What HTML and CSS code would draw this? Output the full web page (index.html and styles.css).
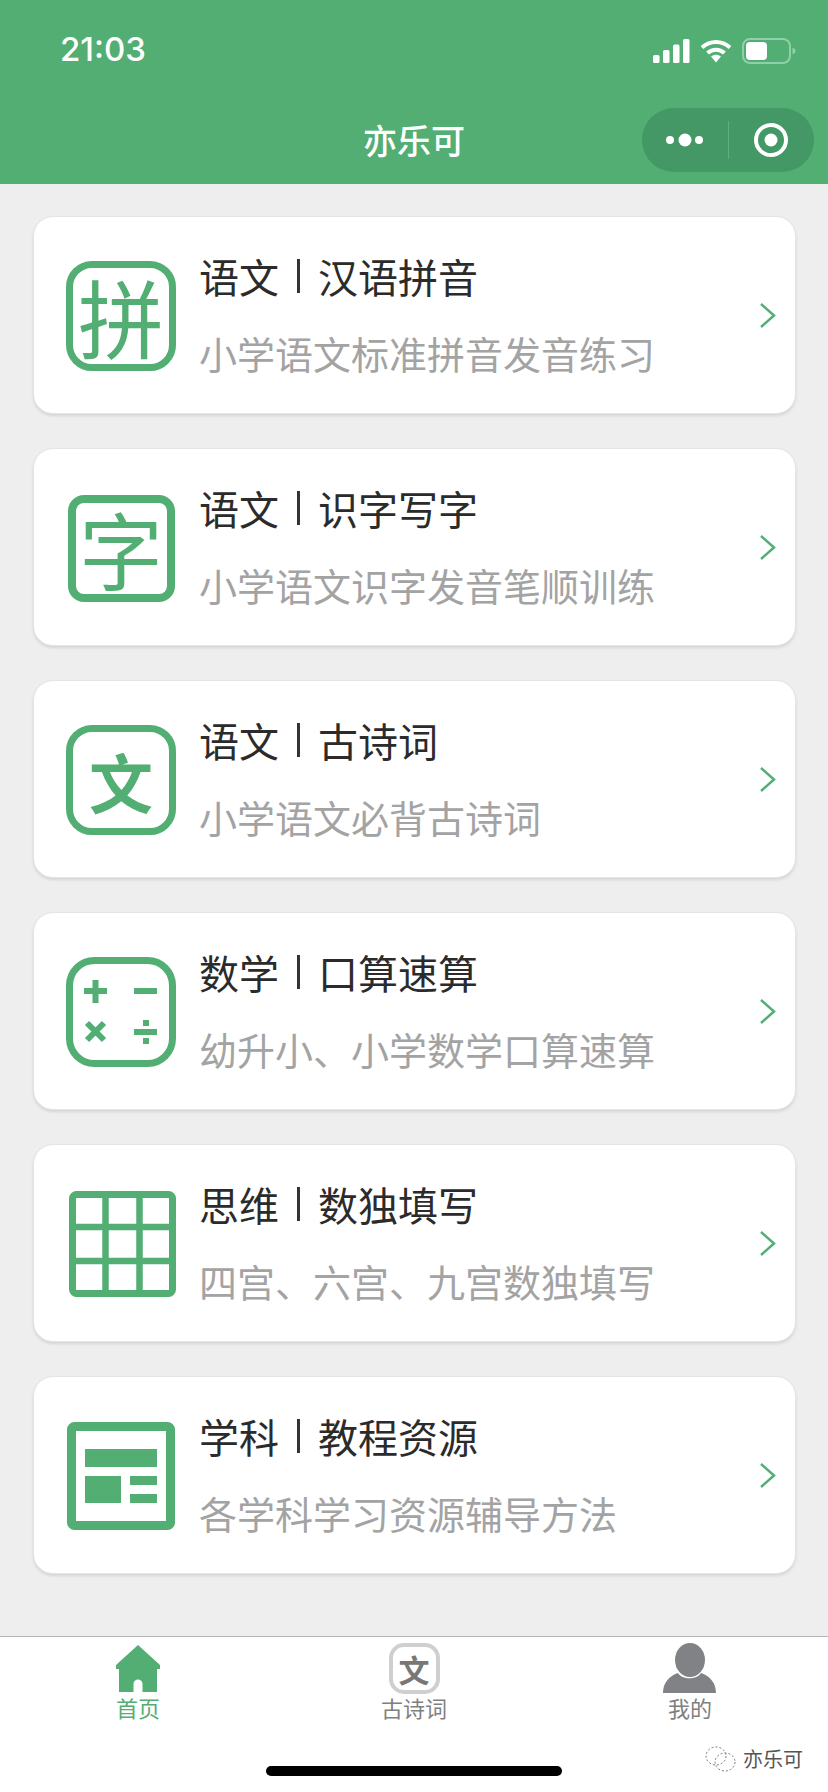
FILE: index.html
```html
<!DOCTYPE html>
<html lang="zh-CN">
<head>
    <meta charset="UTF-8">
    <title>亦乐可</title>
    <link rel="stylesheet" href="styles.css">
</head>
<body>
    <header class="top">
        <div class="status">
            <span class="time">21:03</span>
            <div class="status-icons">
                <svg class="signal" width="37" height="24" viewBox="0 0 37 24"><rect x="0" y="16" width="6.5" height="8" rx="1.5"/><rect x="10" y="11" width="6.5" height="13" rx="1.5"/><rect x="20" y="5.5" width="6.5" height="18.5" rx="1.5"/><rect x="30" y="0" width="6.5" height="24" rx="1.5"/></svg>
                <svg class="wifi" width="32" height="24" viewBox="0 0 32 24"><path d="M2 8.5C10 1 22 1 30 8.5M7.5 14C12.5 9.5 19.5 9.5 24.5 14" fill="none" stroke="#fff" stroke-width="4"/><path d="M11 17.5C14 15 18 15 21 17.5L16 23.5Z" fill="#fff"/></svg>
                <svg class="battery" width="54" height="26" viewBox="0 0 54 26"><rect x="1" y="1" width="47" height="24" rx="7" fill="none" stroke="#8fd0a8" stroke-width="2"/><rect x="4" y="4" width="21" height="18" rx="4" fill="#fff"/><path d="M50.5 9.5C52.5 10.5 53.5 11.5 53.5 13C53.5 14.5 52.5 15.5 50.5 16.5Z" fill="#8fd0a8"/></svg>
            </div>
        </div>
        <div class="nav">
            <h1 class="nav-title">亦乐可</h1>
            <div class="capsule">
                <div class="capsule-part">
                    <svg width="40" height="14" viewBox="0 0 40 14" fill="#fff"><circle cx="5" cy="7" r="4"/><circle cx="20" cy="7" r="6.5"/><circle cx="34" cy="7" r="4"/></svg>
                </div>
                <div class="capsule-line"></div>
                <div class="capsule-part">
                    <svg width="36" height="36" viewBox="0 0 36 36"><circle cx="18" cy="18" r="15" fill="none" stroke="#fff" stroke-width="4"/><circle cx="18" cy="18" r="6.5" fill="#fff"/></svg>
                </div>
            </div>
        </div>
    </header>

    <main class="list">
        <a class="card">
            <div class="slot"><div class="char-icon char-pin">拼</div></div>
            <div class="card-text">
                <div class="card-title">语文 <i class="bar"></i> 汉语拼音</div>
                <div class="card-sub">小学语文标准拼音发音练习</div>
            </div>
            <svg class="arrow" width="18" height="27" viewBox="0 0 18 27"><path d="M2 2L15 13.5L2 25" fill="none" stroke="#52ae73" stroke-width="2.5"/></svg>
        </a>
        <a class="card">
            <div class="slot"><div class="char-icon char-zi">字</div></div>
            <div class="card-text">
                <div class="card-title">语文 <i class="bar"></i> 识字写字</div>
                <div class="card-sub">小学语文识字发音笔顺训练</div>
            </div>
            <svg class="arrow" width="18" height="27" viewBox="0 0 18 27"><path d="M2 2L15 13.5L2 25" fill="none" stroke="#52ae73" stroke-width="2.5"/></svg>
        </a>
        <a class="card">
            <div class="slot"><div class="char-icon char-wen">文</div></div>
            <div class="card-text">
                <div class="card-title">语文 <i class="bar"></i> 古诗词</div>
                <div class="card-sub">小学语文必背古诗词</div>
            </div>
            <svg class="arrow" width="18" height="27" viewBox="0 0 18 27"><path d="M2 2L15 13.5L2 25" fill="none" stroke="#52ae73" stroke-width="2.5"/></svg>
        </a>
        <a class="card">
            <div class="slot">
                <svg width="110" height="110" viewBox="0 0 110 110">
                    <rect x="3.5" y="3.5" width="103" height="103" rx="25" fill="none" stroke="#52ae73" stroke-width="7"/>
                    <path d="M18 34H41M29.5 23V46M68 34H91M68 75H91M21 66L38 83M38 66L21 83" fill="none" stroke="#52ae73" stroke-width="6"/>
                    <rect x="77" y="63" width="6" height="6" fill="#52ae73"/>
                    <rect x="77" y="81" width="6" height="6" fill="#52ae73"/>
                </svg>
            </div>
            <div class="card-text">
                <div class="card-title">数学 <i class="bar"></i> 口算速算</div>
                <div class="card-sub">幼升小、小学数学口算速算</div>
            </div>
            <svg class="arrow" width="18" height="27" viewBox="0 0 18 27"><path d="M2 2L15 13.5L2 25" fill="none" stroke="#52ae73" stroke-width="2.5"/></svg>
        </a>
        <a class="card">
            <div class="slot">
                <svg width="110" height="110" viewBox="0 0 110 110">
                    <rect x="6.5" y="5.5" width="100" height="99" rx="4" fill="none" stroke="#52ae73" stroke-width="7"/>
                    <path d="M39.5 5V105M73.5 5V105M6 38H107M6 72H107" fill="none" stroke="#52ae73" stroke-width="6.5"/>
                </svg>
            </div>
            <div class="card-text">
                <div class="card-title">思维 <i class="bar"></i> 数独填写</div>
                <div class="card-sub">四宫、六宫、九宫数独填写</div>
            </div>
            <svg class="arrow" width="18" height="27" viewBox="0 0 18 27"><path d="M2 2L15 13.5L2 25" fill="none" stroke="#52ae73" stroke-width="2.5"/></svg>
        </a>
        <a class="card">
            <div class="slot">
                <svg width="110" height="110" viewBox="0 0 110 110" fill="#52ae73">
                    <rect x="5.5" y="5.5" width="99" height="99" rx="3" fill="none" stroke="#52ae73" stroke-width="9"/>
                    <rect x="19" y="28" width="72" height="18"/>
                    <rect x="19" y="55" width="36" height="27"/>
                    <rect x="64" y="55" width="27" height="9"/>
                    <rect x="64" y="73" width="27" height="9"/>
                </svg>
            </div>
            <div class="card-text">
                <div class="card-title">学科 <i class="bar"></i> 教程资源</div>
                <div class="card-sub">各学科学习资源辅导方法</div>
            </div>
            <svg class="arrow" width="18" height="27" viewBox="0 0 18 27"><path d="M2 2L15 13.5L2 25" fill="none" stroke="#52ae73" stroke-width="2.5"/></svg>
        </a>
    </main>

    <nav class="tabs">
        <div class="tab tab-on">
            <div class="tab-icon">
                <svg width="44" height="47" viewBox="0 0 44 47"><path d="M22 0L44 20V24H41V47H26.5V39C26.5 33 17.5 33 17.5 39V47H3V24H0V20Z" fill="#52ae73"/></svg>
            </div>
            <span>首页</span>
        </div>
        <div class="tab">
            <div class="tab-icon"><div class="tab-wen">文</div></div>
            <span>古诗词</span>
        </div>
        <div class="tab">
            <div class="tab-icon">
                <svg width="54" height="50" viewBox="0 0 54 50" fill="#808285"><ellipse cx="27" cy="17" rx="15" ry="17"/><path d="M0 50C0 40 6 33 15 30C19 37 34 37 38 30C47 33 53 40 53 50Z"/></svg>
            </div>
            <span>我的</span>
        </div>
        <div class="home-bar"></div>
        <div class="mark">
            <svg width="33" height="28" viewBox="0 0 33 28" fill="none" stroke="#777" stroke-width="1" stroke-dasharray="2 2"><ellipse cx="12" cy="11" rx="10" ry="9"/><ellipse cx="21" cy="17" rx="10" ry="9"/></svg>
            <span>亦乐可</span>
        </div>
    </nav>
</body>
</html>
```

FILE: styles.css
```css
* { margin: 0; padding: 0; box-sizing: border-box; }
body {
    width: 828px;
    height: 1792px;
    overflow: hidden;
    display: flex;
    flex-direction: column;
    background-color: #eeeeee;
    font-family: "Noto Sans CJK SC", "Noto Sans", sans-serif;
}

/* top green bar */
.top {
    height: 184px;
    background-color: #52ae73;
    color: #fff;
}
.status {
    height: 100px;
    padding: 0 32px 0 60px;
    display: flex;
    justify-content: space-between;
    align-items: flex-start;
}
.time {
    margin-top: 28px;
    font-family: Inter, sans-serif;
    font-size: 33px;
    line-height: 42px;
    font-weight: 500;
}
.status-icons {
    margin-top: 38px;
    display: flex;
    align-items: center;
    gap: 10px;
}
.signal { fill: #fff; }
.nav {
    position: relative;
    height: 84px;
    display: flex;
    justify-content: center;
}
.nav-title {
    margin-top: 16px;
    font-size: 34px;
    line-height: 48px;
    font-weight: 500;
}
.capsule {
    position: absolute;
    top: 8px;
    right: 14px;
    width: 172px;
    height: 64px;
    border-radius: 32px;
    background-color: #439865;
    display: flex;
    align-items: center;
}
.capsule-part {
    flex: 1;
    display: flex;
    justify-content: center;
}
.capsule-line {
    width: 1px;
    height: 38px;
    background-color: #5bb07c;
}

/* cards */
.list {
    flex: 1;
    padding: 32px 32px 0 33px;
    display: flex;
    flex-direction: column;
    gap: 34px;
}
.card {
    height: 198px;
    padding: 0 18px 0 32px;
    display: flex;
    align-items: center;
    gap: 23px;
    background-color: #fff;
    border-radius: 20px;
    border: 1px solid #e4e4e4;
    box-shadow: 0 2px 3px rgba(0, 0, 0, 0.1);
}
.slot {
    width: 110px;
    height: 110px;
    margin-top: 2px;
    flex-shrink: 0;
    display: flex;
    align-items: center;
    justify-content: center;
}
.char-icon {
    color: #52ae73;
    display: flex;
    align-items: center;
    justify-content: center;
    line-height: 1;
}
.char-pin {
    width: 110px;
    height: 110px;
    border: 7px solid #52ae73;
    border-radius: 26px;
    font-size: 86px;
}
.char-zi {
    width: 107px;
    height: 107px;
    border: 8px solid #52ae73;
    border-radius: 16px;
    font-size: 84px;
}
.char-wen {
    width: 110px;
    height: 110px;
    border: 7px solid #52ae73;
    border-radius: 26px;
    font-size: 64px;
    font-weight: 700;
}
.card-text {
    flex: 1;
    padding-bottom: 2px;
    display: flex;
    flex-direction: column;
    gap: 21px;
}
.card-title {
    font-size: 40px;
    line-height: 56px;
    color: #2b2b2b;
    display: flex;
    align-items: center;
    gap: 18px;
}
.bar {
    width: 3px;
    height: 34px;
    background-color: #333;
}
.card-sub {
    font-size: 38px;
    line-height: 56px;
    color: #a3a3a3;
}
.arrow { flex-shrink: 0; }

/* bottom tabs */
.tabs {
    position: relative;
    height: 156px;
    background-color: #fff;
    border-top: 1px solid #b4b4b4;
    padding-top: 5px;
    display: grid;
    grid-template-columns: repeat(3, 1fr);
    align-content: start;
}
.tab {
    display: flex;
    flex-direction: column;
    align-items: center;
    font-size: 22px;
    line-height: 26px;
    color: #808080;
}
.tab-on { color: #52ae73; }
.tab-icon {
    height: 52px;
    display: flex;
    align-items: center;
    justify-content: center;
}
.tab-wen {
    width: 51px;
    height: 51px;
    border: 4px solid #cfcfcf;
    border-radius: 15px;
    display: flex;
    align-items: center;
    justify-content: center;
    font-size: 31px;
    line-height: 1;
    font-weight: 700;
    color: #777;
}
.home-bar {
    position: absolute;
    left: 266px;
    bottom: 16px;
    width: 296px;
    height: 10px;
    border-radius: 5px;
    background-color: #000;
}
.mark {
    position: absolute;
    left: 704px;
    top: 108px;
    display: flex;
    align-items: center;
    gap: 6px;
    font-size: 20px;
    line-height: 28px;
    color: #555;
}
```
